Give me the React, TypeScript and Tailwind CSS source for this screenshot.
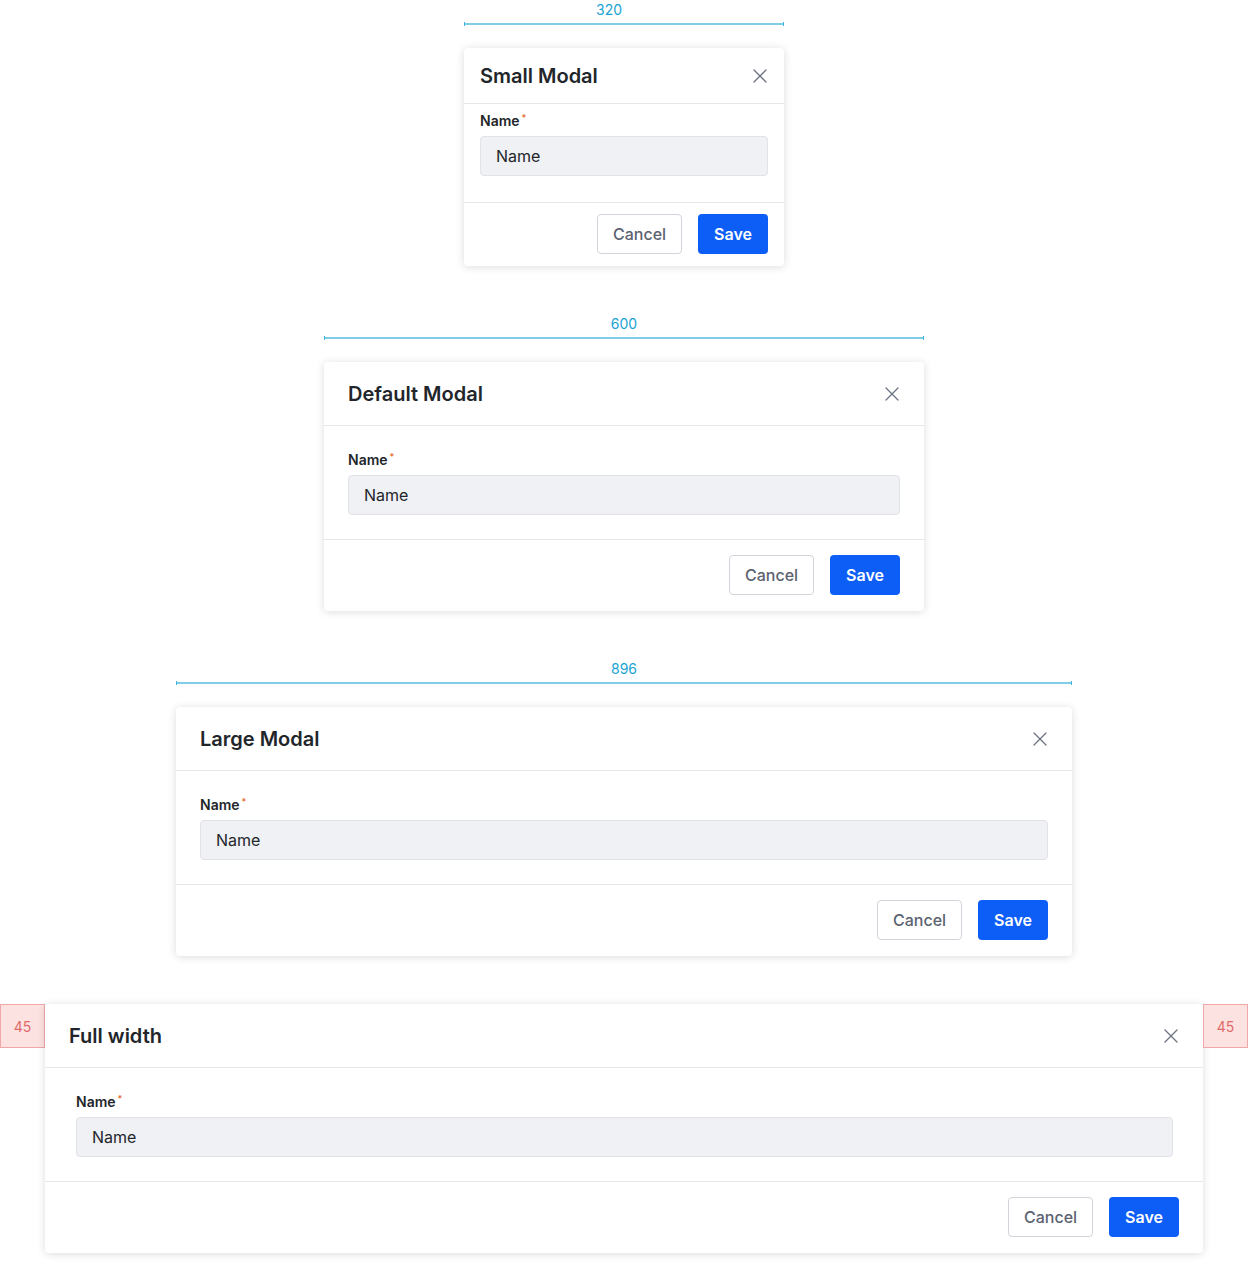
import React from 'react';

const font = { fontFamily: 'Inter, "Noto Sans", sans-serif' };

const CloseIcon = () => (
  <svg width="14" height="14" viewBox="0 0 14 14" fill="none" className="text-[#6b7280]">
    <path d="M1 1L13 13M13 1L1 13" stroke="currentColor" strokeWidth="1.3" strokeLinecap="round" />
  </svg>
);

interface ModalProps {
  title: string;
  small?: boolean;
  full?: boolean;
}

const Modal = ({ title, small, full }: ModalProps) => {
  const headerCls = small ? 'h-14 pl-4 pr-[17px]' : 'h-16 pl-6 pr-[25px]';
  const bodyCls = small ? 'px-4 pt-[7px] pb-[26px]' : full ? 'pl-[31px] pr-[30px] py-6' : 'px-6 py-6';
  const footCls = small ? 'px-4 pt-[11px] pb-3' : 'px-6 pt-[15px] pb-4';
  return (
    <div className="w-full bg-white rounded shadow-[0_1px_8px_rgba(0,0,0,0.14)]">
      <div className={`flex items-center justify-between border-b border-[#e5e7eb] ${headerCls}`}>
        <h2 className="text-[20px] font-semibold text-[#22262b] leading-7">{title}</h2>
        <CloseIcon />
      </div>
      <div className={bodyCls}>
        <label className="flex items-center text-[14px] leading-5 font-semibold text-[#22262b]">
          Name<span className="ml-[2px] -mt-[6px] text-[9px] leading-3 text-[#e4703a]">*</span>
        </label>
        <div className="mt-[5px] h-10 flex items-center pl-[15px] pr-4 rounded bg-[#f0f1f4] border border-[#e1e3e8] text-[16px] text-[#22262b]">
          Name
        </div>
      </div>
      <div className={`flex justify-end gap-4 border-t border-[#e5e7eb] ${footCls}`}>
        <button className="h-10 px-[15px] rounded border border-[#d1d5db] bg-white text-[16px] font-medium text-[#5b6270]">
          Cancel
        </button>
        <button className="h-10 px-4 rounded bg-[#0c5ef6] text-[16px] font-semibold text-white">
          Save
        </button>
      </div>
    </div>
  );
};

const Measure = ({ value, offset }: { value: number; offset?: boolean }) => (
  <div className="w-full flex flex-col">
    <div className={`h-5 text-center text-[14px] leading-5 text-[#1aa3d4] ${offset ? 'pr-[30px]' : ''}`}>{value}</div>
    <div className="mt-[3px] h-[2px] flex items-center">
      <div className="w-px h-[4px] shrink-0 bg-[#3fb3dc]" />
      <div className="flex-1 h-[2px] bg-[#7fcde6]" />
      <div className="w-px h-[4px] shrink-0 bg-[#3fb3dc]" />
    </div>
  </div>
);

const Section = ({ width, title, value, small }: { width: string; title: string; value: number; small?: boolean }) => (
  <div className={`flex flex-col gap-[23px] ${width}`}>
    <Measure value={value} offset={small} />
    <Modal title={title} small={small} />
  </div>
);

const Marker = () => (
  <div className="w-[45px] h-[44px] shrink-0 flex items-center justify-center bg-[#fde2e2] border border-[#f2a8a8] text-[14px] text-[#e06a6a]">
    45
  </div>
);

export default function App() {
  return (
    <div style={font} className="w-[1248px] min-h-[1269px] bg-white flex flex-col items-center pb-4">
      <Section width="w-[320px]" title="Small Modal" value={320} small />
      <div className="mt-12">
        <Section width="w-[600px]" title="Default Modal" value={600} />
      </div>
      <div className="mt-12">
        <Section width="w-[896px]" title="Large Modal" value={896} />
      </div>
      <div className="mt-12 w-full flex items-start">
        <Marker />
        <div className="flex-1">
          <Modal title="Full width" full />
        </div>
        <Marker />
      </div>
    </div>
  );
}
